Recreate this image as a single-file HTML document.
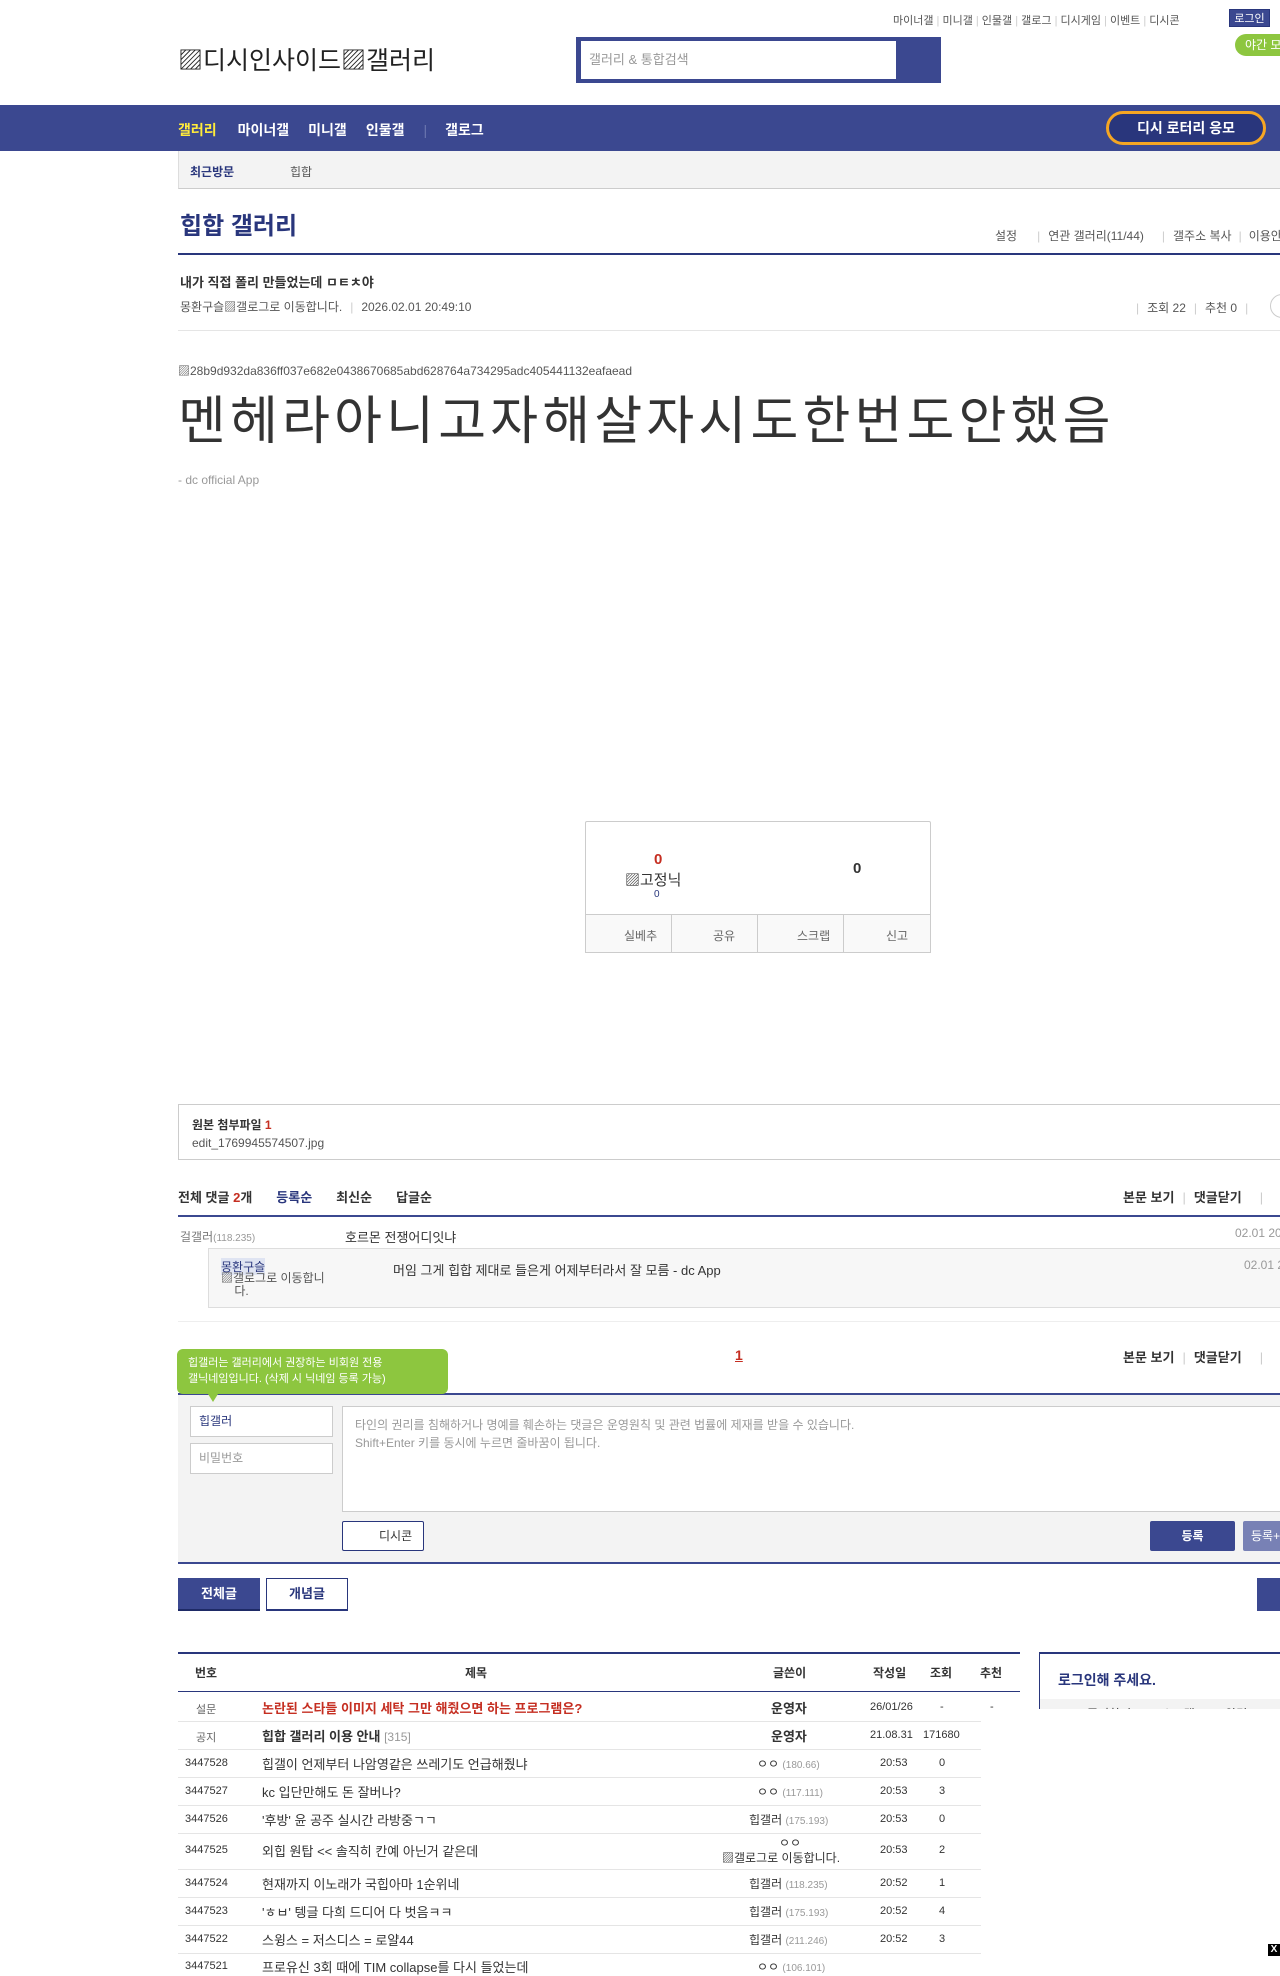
<!DOCTYPE html>
<html><head><meta charset="utf-8">
<style>
*{margin:0;padding:0;box-sizing:border-box}
body{width:1280px;height:1956px;overflow:hidden;position:relative;background:#fff;font-family:"Liberation Sans","Noto Sans CJK KR",sans-serif;color:#333;font-size:12px}
.a{position:absolute;white-space:nowrap}
.navy{background:#3b4890}
.ln{position:absolute;height:1px;background:#e5e5e5}
.w{position:absolute;left:0;width:1280px;height:0}
</style></head><body>
<!-- top links -->
<div class="a" style="left:893px;top:12px;font-size:11px;color:#555">마이너갤 <span style="color:#ccc">|</span> 미니갤 <span style="color:#ccc">|</span> 인물갤 <span style="color:#ccc">|</span> 갤로그 <span style="color:#ccc">|</span> 디시게임 <span style="color:#ccc">|</span> 이벤트 <span style="color:#ccc">|</span> 디시콘</div>
<div class="a navy" style="left:1229px;top:9px;width:41px;height:18px;color:#fff;font-size:11px;line-height:18px;text-align:center;border:1px solid #29367c">로그인</div>
<div class="a" style="left:1235px;top:34px;width:60px;height:22px;background:#8dc63f;border-radius:11px;color:#fff;font-size:12px;line-height:22px;padding-left:10px">야간 모드</div>
<div class="a" style="left:178px;top:41px;font-size:25px;color:#222">▨디시인사이드▨갤러리</div>
<div class="a navy" style="left:576px;top:37px;width:365px;height:46px"></div>
<div class="a" style="left:581px;top:41px;width:315px;height:38px;background:#fff;color:#999;font-size:13px;line-height:38px;padding-left:8px">갤러리 &amp; 통합검색</div>
<!-- nav -->
<div class="a navy" style="left:0;top:105px;width:1280px;height:46px"></div>
<div class="a" style="left:178px;top:121px;font-size:14px;font-weight:bold;color:#fff;line-height:18px"><span style="color:#ffeb3b">갤러리</span><span style="margin-left:21px">마이너갤</span><span style="margin-left:19px">미니갤</span><span style="margin-left:19px">인물갤</span><span style="margin-left:19px;color:#6b76b0;font-weight:normal">|</span><span style="margin-left:18px">갤로그</span></div>
<div class="a" style="left:1106px;top:111px;width:160px;height:34px;border:3px solid #f5a623;border-radius:17px;background:#29367c;color:#fff;font-size:14px;font-weight:bold;text-align:center;line-height:28px">디시 로터리 응모</div>
<!-- sub bar -->
<div class="a" style="left:178px;top:151px;width:1102px;height:38px;background:#f3f3f3;border-left:1px solid #ddd;border-bottom:1px solid #ccc"></div>
<div class="a" style="left:190px;top:163px;font-size:12px;font-weight:bold;color:#29367c">최근방문</div>
<div class="a" style="left:290px;top:163px;font-size:12px;color:#555">힙합</div>
<!-- title -->
<div class="a" style="left:180px;top:206px;font-size:24px;font-weight:bold;color:#29367c">힙합 갤러리</div>
<div class="a" style="left:995px;top:227px;font-size:12px;color:#555">설정<span style="color:#ccc;margin:0 8px 0 20px">|</span>연관 갤러리(11/44)<span style="color:#ccc;margin:0 8px 0 18px">|</span>갤주소 복사<span style="color:#ccc;margin:0 7px">|</span>이용안내</div>
<div class="a" style="left:178px;top:253px;width:1102px;height:2px;background:#29367c"></div>
<div class="a" style="left:180px;top:272px;font-size:13px;font-weight:bold;color:#333">내가 직접 폴리 만들었는데 ㅁㅌㅊ야</div>
<div class="a" style="left:180px;top:298px;font-size:12px;color:#555">몽환구슬▨갤로그로 이동합니다.<span style="color:#ccc;margin:0 8px">|</span>2026.02.01 20:49:10</div>
<div class="a" style="left:1136px;top:299px;font-size:12px;color:#555"><span style="color:#ccc;margin-right:8px">|</span>조회 22<span style="color:#ccc;margin:0 8px">|</span>추천 0<span style="color:#ccc;margin-left:8px">|</span></div>
<div class="a" style="left:1270px;top:294px;width:24px;height:24px;border:1px solid #ccc;border-radius:12px"></div>
<div class="ln" style="left:178px;top:330px;width:1102px"></div>
<div class="a" style="left:178px;top:362px;font-size:12px;color:#555">▨28b9d932da836ff037e682e0438670685abd628764a734295adc405441132eafaead</div>
<div class="a" style="left:178px;top:390px;font-size:52px;color:#333;letter-spacing:4.2px;line-height:64px">멘헤라아니고자해살자시도한번도안했음</div>
<div class="a" style="left:178px;top:473px;font-size:12px;color:#999">- dc official App</div>

<div class="w" style="top:4px">
<!-- recommend box -->
<div class="a" style="left:585px;top:817px;width:346px;height:132px;border:1px solid #ccc;border-radius:2px"></div>
<div class="a" style="left:585px;top:910px;width:346px;height:39px;background:#f9f9f9;border:1px solid #ccc"></div>
<div class="a" style="left:671px;top:910px;width:1px;height:38px;background:#ccc"></div>
<div class="a" style="left:757px;top:910px;width:1px;height:38px;background:#ccc"></div>
<div class="a" style="left:843px;top:910px;width:1px;height:38px;background:#ccc"></div>
<div class="a" style="left:624px;top:923px;font-size:12px;color:#666">실베추</div>
<div class="a" style="left:713px;top:923px;font-size:12px;color:#666">공유</div>
<div class="a" style="left:797px;top:923px;font-size:12px;color:#666">스크랩</div>
<div class="a" style="left:886px;top:923px;font-size:12px;color:#666">신고</div>
<div class="a" style="left:654px;top:847px;font-size:15px;font-weight:bold;color:#c52e21">0</div>
<div class="a" style="left:625px;top:865px;font-size:15px;color:#333">▨고정닉</div>
<div class="a" style="left:654px;top:885px;font-size:10px;color:#29367c">0</div>
<div class="a" style="left:853px;top:856px;font-size:15px;font-weight:bold;color:#333">0</div>
</div>

<div class="w" style="top:8px">
<!-- attachments -->
<div class="a" style="left:178px;top:1096px;width:1110px;height:56px;border:1px solid #ccc"></div>
<div class="a" style="left:192px;top:1108px;font-size:12px;font-weight:bold;color:#333">원본 첨부파일 <span style="color:#c52e21">1</span></div>
<div class="a" style="left:192px;top:1128px;font-size:12px;color:#555">edit_1769945574507.jpg</div>
<!-- comments header -->
<div class="a" style="left:178px;top:1179px;font-size:13px;font-weight:bold;color:#333">전체 댓글 <span style="color:#c52e21">2</span>개<span style="color:#29367c;margin-left:24px">등록순</span><span style="margin-left:24px">최신순</span><span style="margin-left:24px">답글순</span></div>
<div class="a" style="left:1123px;top:1179px;font-size:13px;font-weight:bold;color:#333">본문 보기<span style="color:#ccc;font-weight:normal;margin:0 8px">|</span>댓글닫기<span style="color:#ccc;font-weight:normal;margin-left:18px">|</span></div>
<div class="a" style="left:178px;top:1207px;width:1102px;height:2px;background:#3b4890"></div>
<div class="a" style="left:180px;top:1220px;font-size:12px;color:#777">걸갤러<span style="font-size:10px;color:#999">(118.235)</span></div>
<div class="a" style="left:345px;top:1219px;font-size:13px;color:#333">호르몬 전쟁어디잇냐</div>
<div class="a" style="left:1235px;top:1218px;font-size:12px;color:#999">02.01 20:50</div>
<div class="a" style="left:208px;top:1240px;width:1080px;height:60px;background:#f7f7f7;border:1px solid #ddd"></div>
<div class="a" style="left:221px;top:1250px;font-size:12px;color:#29367c;background:#dfe4f2">몽환구슬</div>
<div class="a" style="left:221px;top:1264px;font-size:12px;color:#555;line-height:13px">▨갤로그로 이동합니<br>&nbsp;&nbsp;&nbsp;&nbsp;다.</div>
<div class="a" style="left:393px;top:1252px;font-size:13px;color:#333">머임 그게 힙합 제대로 들은게 어제부터라서 잘 모름 - dc App</div>
<div class="a" style="left:1244px;top:1250px;font-size:12px;color:#999">02.01 20:51</div>
<div class="ln" style="left:178px;top:1313px;width:1102px;background:#eee"></div>
<!-- pagination row -->
<div class="a" style="left:735px;top:1339px;font-size:14px;font-weight:bold;color:#c52e21;text-decoration:underline">1</div>
<div class="a" style="left:1123px;top:1339px;font-size:13px;font-weight:bold;color:#333">본문 보기<span style="color:#ccc;font-weight:normal;margin:0 8px">|</span>댓글닫기<span style="color:#ccc;font-weight:normal;margin-left:18px">|</span></div>
<div class="a" style="left:178px;top:1385px;width:1102px;height:2px;background:#3b4890"></div>
<!-- write area -->
<div class="a" style="left:178px;top:1387px;width:1102px;height:168px;background:#f3f3f3"></div>
<div class="a" style="left:177px;top:1341px;width:271px;height:45px;background:#8dc63f;border-radius:6px;color:#fff;font-size:11px;line-height:16px;padding:6px 11px">힙갤러는 갤러리에서 권장하는 비회원 전용<br>갤닉네임입니다. (삭제 시 닉네임 등록 가능)</div>
<div class="a" style="left:208px;top:1386px;width:0;height:0;border-left:5px solid transparent;border-right:5px solid transparent;border-top:8px solid #8dc63f"></div>
<div class="a" style="left:190px;top:1398px;width:143px;height:31px;background:#fff;border:1px solid #ccc;font-size:12px;color:#29367c;line-height:29px;padding-left:8px">힙갤러</div>
<div class="a" style="left:190px;top:1435px;width:143px;height:31px;background:#fff;border:1px solid #ccc;font-size:12px;color:#999;line-height:29px;padding-left:8px">비밀번호</div>
<div class="a" style="left:342px;top:1398px;width:950px;height:106px;background:#fff;border:1px solid #ccc;font-size:12px;color:#999;line-height:18px;padding:9px 12px">타인의 권리를 침해하거나 명예를 훼손하는 댓글은 운영원칙 및 관련 법률에 제재를 받을 수 있습니다.<br>Shift+Enter 키를 동시에 누르면 줄바꿈이 됩니다.</div>
<div class="a" style="left:342px;top:1513px;width:82px;height:30px;background:#fff;border:1px solid #29367c;border-radius:2px;font-size:12px;color:#333;line-height:28px;padding-left:36px">디시콘</div>
<div class="a navy" style="left:1150px;top:1513px;width:85px;height:30px;border-radius:2px;color:#fff;font-size:12px;font-weight:bold;text-align:center;line-height:30px">등록</div>
<div class="a" style="left:1243px;top:1513px;width:85px;height:30px;border-radius:2px;background:#7881b5;color:#fff;font-size:12px;line-height:30px;padding-left:8px">등록+추천</div>
<div class="a" style="left:178px;top:1554px;width:1102px;height:2px;background:#3b4890"></div>
<div class="a navy" style="left:178px;top:1570px;width:82px;height:33px;border-bottom:2px solid #1e2a66;color:#fff;font-size:13px;font-weight:bold;text-align:center;line-height:31px">전체글</div>
<div class="a" style="left:266px;top:1570px;width:82px;height:33px;border:1px solid #29367c;border-bottom:2px solid #29367c;color:#29367c;font-size:13px;font-weight:bold;text-align:center;line-height:30px">개념글</div>
<div class="a navy" style="left:1257px;top:1570px;width:60px;height:33px"></div>
<!-- list table -->
<div class="a" style="left:178px;top:1644px;width:842px;height:2px;background:#29367c"></div>
<div class="a" style="left:178px;top:1683px;width:842px;height:1px;background:#29367c"></div>
<div class="a" style="left:195px;top:1656px;font-size:12px;font-weight:bold">번호</div>
<div class="a" style="left:465px;top:1656px;font-size:12px;font-weight:bold">제목</div>
<div class="a" style="left:773px;top:1656px;font-size:12px;font-weight:bold">글쓴이</div>
<div class="a" style="left:873px;top:1656px;font-size:12px;font-weight:bold">작성일</div>
<div class="a" style="left:930px;top:1656px;font-size:12px;font-weight:bold">조회</div>
<div class="a" style="left:980px;top:1656px;font-size:12px;font-weight:bold">추천</div>

<div class="a" style="left:196px;top:1693px;font-size:11px;color:#666">설문</div>
<div class="a" style="left:262px;top:1690px;font-size:13px;font-weight:bold;color:#c52e21">논란된 스타들 이미지 세탁 그만 해줬으면 하는 프로그램은?</div>
<div class="a" style="left:771px;top:1690px;font-size:13px;font-weight:bold">운영자</div>
<div class="a" style="left:870px;top:1693px;font-size:11px">26/01/26</div>
<div class="a" style="left:940px;top:1693px;font-size:11px">-</div>
<div class="a" style="left:990px;top:1693px;font-size:11px">-</div>
<div class="ln" style="left:178px;top:1713px;width:803px"></div>

<div class="a" style="left:196px;top:1721px;font-size:11px;color:#666">공지</div>
<div class="a" style="left:262px;top:1718px;font-size:13px;font-weight:bold">힙합 갤러리 이용 안내 <span style="font-weight:normal;color:#999;font-size:12px">[315]</span></div>
<div class="a" style="left:771px;top:1718px;font-size:13px;font-weight:bold">운영자</div>
<div class="a" style="left:870px;top:1721px;font-size:11px">21.08.31</div>
<div class="a" style="left:923px;top:1721px;font-size:11px">171680</div>
<div class="ln" style="left:178px;top:1741px;width:803px"></div>

<div class="a" style="left:185px;top:1749px;font-size:11px">3447528</div>
<div class="a" style="left:262px;top:1746px;font-size:13px">힙갤이 언제부터 나암영같은 쓰레기도 언급해줬냐</div>
<div class="a" style="left:757px;top:1747px;font-size:12px">ㅇㅇ <span style="font-size:10px;color:#999">(180.66)</span></div>
<div class="a" style="left:880px;top:1749px;font-size:11px">20:53</div>
<div class="a" style="left:939px;top:1749px;font-size:11px">0</div>
<div class="ln" style="left:178px;top:1769px;width:803px"></div>

<div class="a" style="left:185px;top:1777px;font-size:11px">3447527</div>
<div class="a" style="left:262px;top:1774px;font-size:13px">kc 입단만해도 돈 잘버나?</div>
<div class="a" style="left:757px;top:1775px;font-size:12px">ㅇㅇ <span style="font-size:10px;color:#999">(117.111)</span></div>
<div class="a" style="left:880px;top:1777px;font-size:11px">20:53</div>
<div class="a" style="left:939px;top:1777px;font-size:11px">3</div>
<div class="ln" style="left:178px;top:1797px;width:803px"></div>

<div class="a" style="left:185px;top:1805px;font-size:11px">3447526</div>
<div class="a" style="left:262px;top:1802px;font-size:13px">'후방' 윤 공주 실시간 라방중ㄱㄱ</div>
<div class="a" style="left:749px;top:1803px;font-size:12px">힙갤러 <span style="font-size:10px;color:#999">(175.193)</span></div>
<div class="a" style="left:880px;top:1805px;font-size:11px">20:53</div>
<div class="a" style="left:939px;top:1805px;font-size:11px">0</div>
<div class="ln" style="left:178px;top:1825px;width:803px"></div>

<div class="a" style="left:185px;top:1836px;font-size:11px">3447525</div>
<div class="a" style="left:262px;top:1833px;font-size:13px">외힙 원탑 &lt;&lt; 솔직히 칸예 아닌거 같은데</div>
<div class="a" style="left:779px;top:1826px;font-size:12px">ㅇㅇ</div>
<div class="a" style="left:722px;top:1841px;font-size:12px">▨갤로그로 이동합니다.</div>
<div class="a" style="left:880px;top:1836px;font-size:11px">20:53</div>
<div class="a" style="left:939px;top:1836px;font-size:11px">2</div>
<div class="ln" style="left:178px;top:1861px;width:803px"></div>

<div class="a" style="left:185px;top:1869px;font-size:11px">3447524</div>
<div class="a" style="left:262px;top:1866px;font-size:13px">현재까지 이노래가 국힙아마 1순위네</div>
<div class="a" style="left:749px;top:1867px;font-size:12px">힙갤러 <span style="font-size:10px;color:#999">(118.235)</span></div>
<div class="a" style="left:880px;top:1869px;font-size:11px">20:52</div>
<div class="a" style="left:939px;top:1869px;font-size:11px">1</div>
<div class="ln" style="left:178px;top:1889px;width:803px"></div>

<div class="a" style="left:185px;top:1897px;font-size:11px">3447523</div>
<div class="a" style="left:262px;top:1894px;font-size:13px">'ㅎㅂ' 텡글 다희 드디어 다 벗음ㅋㅋ</div>
<div class="a" style="left:749px;top:1895px;font-size:12px">힙갤러 <span style="font-size:10px;color:#999">(175.193)</span></div>
<div class="a" style="left:880px;top:1897px;font-size:11px">20:52</div>
<div class="a" style="left:939px;top:1897px;font-size:11px">4</div>
<div class="ln" style="left:178px;top:1917px;width:803px"></div>

<div class="a" style="left:185px;top:1925px;font-size:11px">3447522</div>
<div class="a" style="left:262px;top:1922px;font-size:13px">스윙스 = 저스디스 = 로얄44</div>
<div class="a" style="left:749px;top:1923px;font-size:12px">힙갤러 <span style="font-size:10px;color:#999">(211.246)</span></div>
<div class="a" style="left:880px;top:1925px;font-size:11px">20:52</div>
<div class="a" style="left:939px;top:1925px;font-size:11px">3</div>
<div class="ln" style="left:178px;top:1945px;width:803px"></div>

<div class="a" style="left:185px;top:1952px;font-size:11px">3447521</div>
<div class="a" style="left:262px;top:1949px;font-size:13px">프로유신 3회 때에 TIM collapse를 다시 들었는데</div>
<div class="a" style="left:757px;top:1950px;font-size:12px">ㅇㅇ <span style="font-size:10px;color:#999">(106.101)</span></div>

<!-- sidebar -->
<div class="a" style="left:1039px;top:1644px;width:260px;height:57px;border:1px solid #29367c;border-top:2px solid #29367c;border-bottom:none;overflow:hidden">
 <div style="position:absolute;left:18px;top:16px;font-size:14px;font-weight:bold;color:#29367c">로그인해 주세요.</div>
 <div style="position:absolute;left:0;top:45px;width:260px;height:30px;background:#f3f3f3;font-size:12px;color:#333;padding:6px 0 0 47px">즐겨찾기 <span style="color:#ccc;margin:0 12px">|</span>스크랩 <span style="color:#ccc;margin:0 12px">|</span>알림</div>
</div>
</div>
<div class="a" style="left:1268px;top:1944px;width:12px;height:12px;background:#000;color:#fff;font-size:10px;font-weight:bold;line-height:12px;text-align:center">X</div>
</body></html>
